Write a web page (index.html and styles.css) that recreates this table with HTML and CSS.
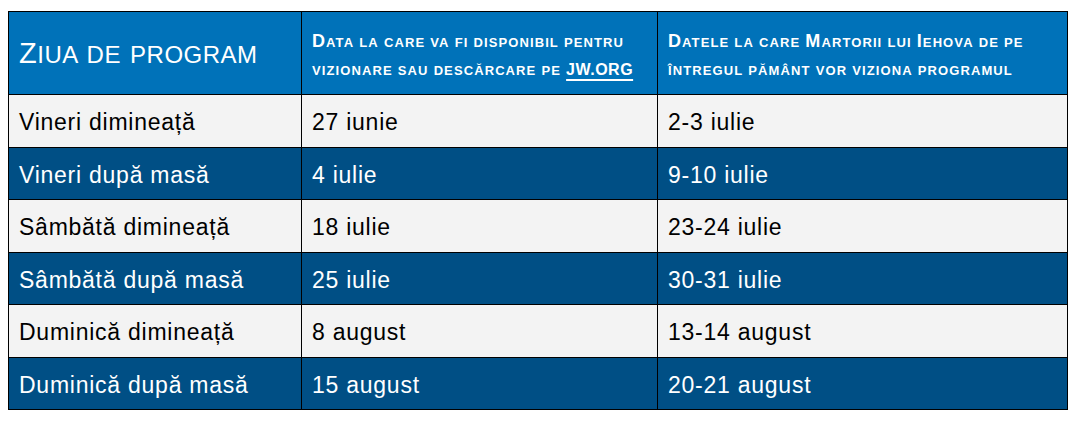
FILE: index.html
```html
<!DOCTYPE html>
<html lang="ro">
<head>
<meta charset="utf-8">
<link rel="stylesheet" href="styles.css">
</head>
<body>
<table class="sched">
  <colgroup>
    <col class="c1"><col class="c2"><col class="c3">
  </colgroup>
  <thead>
    <tr class="head">
      <th class="h-main"><span class="cap">Z</span><span class="sc">iua de program</span></th>
      <th class="h-sub">Data la care va fi disponibil pentru<br>vizionare sau descărcare pe <span class="jw">JW.ORG</span></th>
      <th class="h-sub">Datele la care Martorii lui Iehova de pe<br>întregul pământ vor viziona programul</th>
    </tr>
  </thead>
  <tbody>
    <tr class="light r53"><td>Vineri dimineață</td><td>27 iunie</td><td>2-3 iulie</td></tr>
    <tr class="dark r52"><td>Vineri după masă</td><td>4 iulie</td><td>9-10 iulie</td></tr>
    <tr class="light r53"><td>Sâmbătă dimineață</td><td>18 iulie</td><td>23-24 iulie</td></tr>
    <tr class="dark r52"><td>Sâmbătă după masă</td><td>25 iulie</td><td>30-31 iulie</td></tr>
    <tr class="light r53"><td>Duminică dimineață</td><td>8 august</td><td>13-14 august</td></tr>
    <tr class="dark r52"><td>Duminică după masă</td><td>15 august</td><td>20-21 august</td></tr>
  </tbody>
</table>
</body>
</html>
```
FILE: styles.css
```css
html, body {
  margin: 0;
  padding: 0;
  background: #ffffff;
}
body {
  padding: 11px 0 0 8px;
  font-family: "Liberation Sans", Arial, sans-serif;
}
.sched {
  border-collapse: collapse;
  table-layout: fixed;
  width: 1059px;
}
.c1 { width: 293px; }
.c2 { width: 356px; }
.c3 { width: 410px; }
.sched th, .sched td {
  border: 1px solid #000000;
  padding: 0 0 0 10px;
  text-align: left;
  vertical-align: middle;
}
.head {
  height: 83px;
  background: #0072b9;
  color: #ffffff;
}
.h-main {
  font-weight: normal;
  letter-spacing: 0.5px;
  word-spacing: 2px;
  padding-top: 2px;
}
.h-main .cap {
  font-size: 29px;
}
.h-main .sc {
  font-size: 24px;
  text-transform: uppercase;
}
.sched .h-sub {
  vertical-align: top;
  font-variant: small-caps;
  font-weight: bold;
  font-size: 18px;
  letter-spacing: 1.1px;
  word-spacing: -1px;
  line-height: 28px;
  padding-top: 15px;
}
.jw {
  font-size: 16px;
  letter-spacing: 0.5px;
  text-decoration: underline;
  text-decoration-thickness: 2px;
  text-underline-offset: 4px;
}
.sched td {
  font-size: 23px;
  letter-spacing: 0.75px;
  padding-top: 3px;
}
.light { background: #f3f3f3; color: #000000; }
.dark { background: #004f85; color: #ffffff; }
.r53 { height: 53px; }
.r52 { height: 52px; }
```
